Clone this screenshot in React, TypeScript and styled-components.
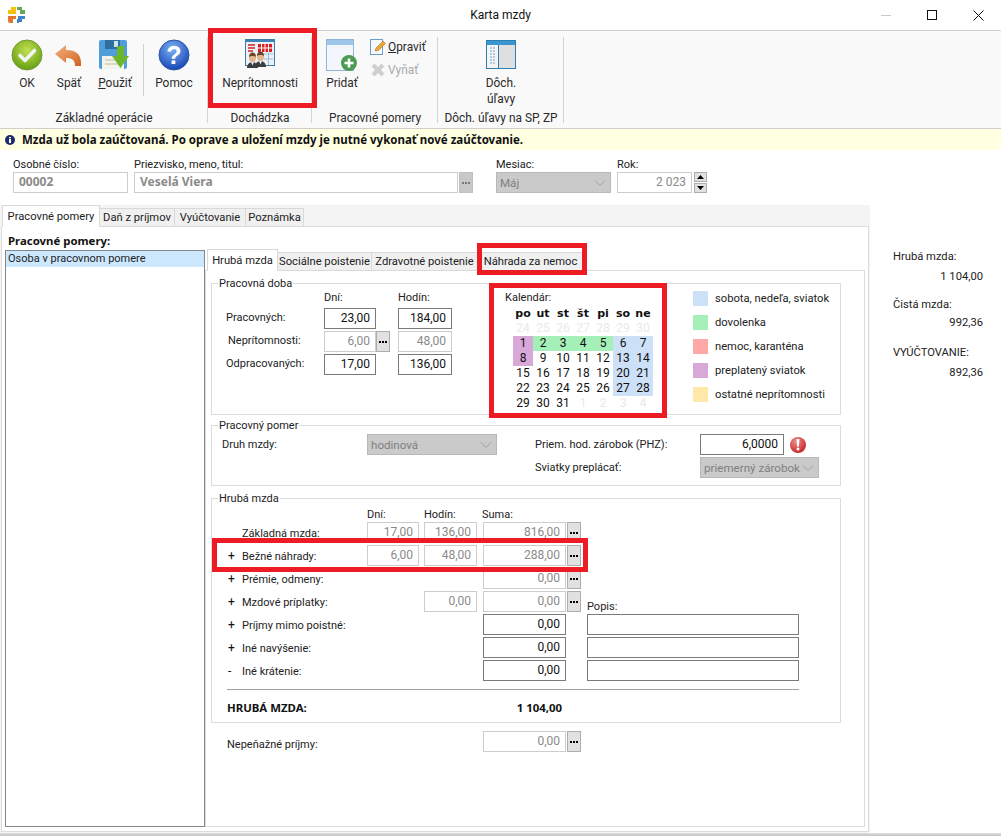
import React from "react";
import styled, { createGlobalStyle } from "styled-components";

const UI = `Roboto, "Liberation Sans", sans-serif`;
const BOLD = `"Noto Sans", "Liberation Sans", sans-serif`;
const CALBOLD = `"DejaVu Sans", "Liberation Sans", sans-serif`;

const Global = createGlobalStyle`
  html, body { margin: 0; padding: 0; background: #fff; }
  body { font: 11px/16px ${UI}; color: #111; }
  * { box-sizing: border-box; }
`;

const Page = styled.div`
  position: relative;
  width: 1001px;
  height: 836px;
  overflow: hidden;
  display: flex;
  flex-direction: column;
`;

const TitleBar = styled.div`
  height: 30px;
  flex: none;
  display: grid;
  grid-template-columns: 1fr auto 1fr;
  align-items: center;
  border-bottom: 1px solid #cfcfcf;
  box-sizing: content-box;
`;
const TitleLogo = styled.div`
  padding: 1px 0 0 8px;
  display: flex;
`;
const TitleText = styled.div`
  font-size: 12px;
`;
const WindowControls = styled.div`
  display: flex;
  justify-content: flex-end;
`;
const WindowControl = styled.div`
  width: 46px;
  height: 30px;
  display: flex;
  align-items: center;
  justify-content: center;
`;

const Ribbon = styled.div`
  height: 98px;
  flex: none;
  display: flex;
  background: #f9f9f9;
  border-bottom: 1px solid #cfcfcf;
  font-size: 11.9px;
`;
const RibbonGroup = styled.div<{ $w: number }>`
  width: ${(p) => p.$w}px;
  position: relative;
  display: flex;
  flex-direction: column;
  &::after {
    content: "";
    position: absolute;
    right: 0;
    top: 6px;
    bottom: 5px;
    width: 1px;
    background: #d4d4d4;
  }
`;
const RibbonTools = styled.div<{ $left?: number; $center?: boolean }>`
  height: 77px;
  display: flex;
  padding-left: ${(p) => p.$left ?? 0}px;
  justify-content: ${(p) => (p.$center ? "center" : "flex-start")};
`;
const GroupLabel = styled.div`
  text-align: center;
  line-height: 20px;
  height: 20px;
  color: #2a2a2a;
  white-space: nowrap;
`;
const Tool = styled.div<{ $w: number }>`
  width: ${(p) => p.$w}px;
  padding-top: 8px;
  display: flex;
  flex-direction: column;
  align-items: center;
  text-align: center;
  color: #2a2a2a;
`;
const ToolIcon = styled.div`
  width: 32px;
  height: 32px;
  margin-bottom: 4px;
  flex: none;
`;
const ToolDivider = styled.div`
  width: 1px;
  height: 52px;
  margin: 13px 0 0 5px;
  background: #d0d0d0;
`;
const SmallTools = styled.div`
  display: flex;
  flex-direction: column;
  gap: 7px;
  padding-top: 8px;
  margin-left: 5px;
`;
const SmallTool = styled.div<{ $off?: boolean }>`
  height: 16px;
  display: flex;
  align-items: center;
  gap: 2px;
  color: ${(p) => (p.$off ? "#aaa" : "#2a2a2a")};
`;

const InfoBar = styled.div`
  height: 21px;
  flex: none;
  display: flex;
  align-items: center;
  gap: 7px;
  padding-left: 5px;
  background: #ffffe1;
  font: bold 11.5px/16px ${BOLD};
  color: #111;
  white-space: nowrap;
`;

const HeaderRow = styled.div`
  height: 55px;
  flex: none;
  display: flex;
  padding: 7px 0 0 13px;
`;
const HeaderField = styled.div<{ $w: number; $ml?: number }>`
  width: ${(p) => p.$w}px;
  margin-left: ${(p) => p.$ml ?? 0}px;
  flex: none;
`;
const HeaderLabel = styled.div`
  color: #222;
  white-space: nowrap;
  height: 15px;
  line-height: 15px;
`;
const FieldWithButton = styled.div`
  display: flex;
  gap: 1px;
`;

const Field = styled.div<{ $kind?: "on" | "off"; $left?: boolean; $w?: number; $bold?: boolean }>`
  height: 21px;
  width: ${(p) => (p.$w ? `${p.$w}px` : "100%")};
  flex: none;
  border: 1px solid ${(p) => (p.$kind === "on" ? "#7a7a7a" : "#cdcdcd")};
  background: #fff;
  color: ${(p) => (p.$kind === "on" ? "#111" : "#8a8a8a")};
  text-align: ${(p) => (p.$left ? "left" : "right")};
  padding: 0 5px;
  line-height: 18px;
  font-family: ${(p) => (p.$bold ? BOLD : UI)};
  font-weight: ${(p) => (p.$bold ? 700 : 400)};
  font-size: 12px;
  white-space: nowrap;
`;
const DotsButton = styled.div<{ $muted?: boolean }>`
  width: 14px;
  height: 21px;
  flex: none;
  background: ${(p) => (p.$muted ? "#c8c8c8" : "#e1e1e1")};
  border: 1px solid ${(p) => (p.$muted ? "#c0c0c0" : "#adadad")};
  display: flex;
  align-items: center;
  justify-content: center;
  gap: 1px;
`;
const Dot = styled.i<{ $muted?: boolean }>`
  width: 2px;
  height: 2px;
  background: ${(p) => (p.$muted ? "#777" : "#000")};
`;
const SelectBox = styled.div`
  height: 21px;
  display: flex;
  align-items: center;
  justify-content: space-between;
  padding: 0 4px 0 3px;
  background: #cacaca;
  border: 1px solid #b8b8b8;
  color: #7f7f7f;
  font-size: 11.6px;
  white-space: nowrap;
`;
const Spin = styled.div`
  width: 13px;
  height: 21px;
  margin-left: 1px;
  flex: none;
  display: flex;
  flex-direction: column;
  gap: 1px;
`;
const SpinPart = styled.div`
  flex: 1;
  background: #e1e1e1;
  border: 1px solid #adadad;
  display: flex;
  align-items: center;
  justify-content: center;
`;

const Workspace = styled.div`
  flex: 1;
  min-height: 0;
  display: flex;
`;
const LeftColumn = styled.div`
  width: 870px;
  flex: none;
  height: 628px;
  background: #f4f4f4;
  display: flex;
  flex-direction: column;
`;
const TabStrip = styled.div<{ $pad: number; $h: number }>`
  display: flex;
  align-items: flex-end;
  height: ${(p) => p.$h}px;
  padding-left: ${(p) => p.$pad}px;
  flex: none;
  position: relative;
  z-index: 1;
`;
const Tab = styled.div<{ $w: number; $active?: boolean }>`
  width: ${(p) => p.$w}px;
  height: ${(p) => (p.$active ? 22 : 19)}px;
  margin-bottom: -1px;
  flex: none;
  border: 1px solid #d9d9d9;
  border-bottom-color: ${(p) => (p.$active ? "#fff" : "#d9d9d9")};
  border-left-width: ${(p) => (p.$active ? 1 : 0)}px;
  background: ${(p) => (p.$active ? "#fff" : "#f0f0f0")};
  color: #222;
  padding-top: ${(p) => (p.$active ? 3 : 1)}px;
  text-align: center;
  font-size: 11.2px;
  white-space: nowrap;
`;
const OuterPanel = styled.div`
  margin-left: 1px;
  width: 868px;
  height: 606px;
  flex: none;
  background: #fff;
  border: 1px solid #dcdcdc;
  padding: 6px 0 0 3px;
`;
const PanelTitle = styled.div`
  font: bold 11.4px/16px ${BOLD};
  margin: 0 0 1px 3px;
  color: #111;
`;
const PanelBody = styled.div`
  display: flex;
  height: 577px;
`;
const PersonList = styled.div`
  width: 200px;
  flex: none;
  border: 1px solid #85858c;
  height: 577px;
`;
const PersonRow = styled.div`
  height: 16px;
  background: #cce8ff;
  padding-left: 2px;
  line-height: 16px;
  color: #222;
`;
const InnerArea = styled.div`
  width: 660px;
  flex: none;
  display: flex;
  flex-direction: column;
`;
const InnerPanel = styled.div`
  flex: 1;
  border: 1px solid #dcdcdc;
  padding: 12px 23px 0 5px;
`;
const Group = styled.div<{ $h: number; $mb?: number }>`
  position: relative;
  height: ${(p) => p.$h}px;
  margin-bottom: ${(p) => p.$mb ?? 0}px;
  border: 1px solid #dcdcdc;
`;
const GroupLegend = styled.div`
  position: absolute;
  left: 6px;
  top: -7px;
  background: #fff;
  padding: 0 1px;
  color: #222;
  line-height: 14px;
`;

const DobaRow = styled.div`
  display: flex;
`;
const DobaGrid = styled.div`
  display: grid;
  grid-template-columns: 112px 52px 15px 7px 54px;
  grid-template-rows: 22px repeat(3, 21px);
  row-gap: 2px;
`;
const ColHead = styled.div<{ $col: number }>`
  grid-column: ${(p) => p.$col};
  padding-top: 7px;
  color: #222;
  line-height: 14px;
`;
const DobaLabel = styled.div<{ $pad: number }>`
  grid-column: 1;
  padding-left: ${(p) => p.$pad}px;
  line-height: 20px;
  color: #222;
  white-space: nowrap;
`;
const CalendarBlock = styled.div`
  margin-left: 53px;
  padding-top: 6px;
  width: 148px;
`;
const CalendarLabel = styled.div`
  line-height: 16px;
  color: #222;
`;
const CalendarGrid = styled.div`
  display: grid;
  grid-template-columns: repeat(7, 20px);
  grid-auto-rows: 15px;
  margin-left: 8px;
`;
const CalHead = styled.div`
  font: bold 11px/15px ${CALBOLD};
  text-align: center;
  color: #111;
`;
const CalCell = styled.div<{ $tone?: string; $faint?: boolean }>`
  text-align: center;
  line-height: 15px;
  font-size: 12px;
  background: ${(p) => p.$tone ?? "transparent"};
  color: ${(p) => (p.$faint ? "#e9e9e9" : "#111")};
`;
const LegendList = styled.div`
  margin-left: 40px;
  padding-top: 7px;
  display: flex;
  flex-direction: column;
  gap: 9px;
`;
const LegendItem = styled.div`
  display: flex;
  height: 15px;
  align-items: center;
  gap: 7px;
  color: #222;
  white-space: nowrap;
  font-size: 11.2px;
`;
const Swatch = styled.div<{ $c: string }>`
  width: 15px;
  height: 15px;
  background: ${(p) => p.$c};
`;

const PomerGrid = styled.div`
  display: grid;
  grid-template-columns: 155px 130px 38px 165px 119px;
  grid-template-rows: 21px 21px;
  row-gap: 2px;
  padding-top: 8px;
`;
const PomerLabel = styled.div<{ $col: number; $pad?: number }>`
  grid-column: ${(p) => p.$col};
  padding-left: ${(p) => p.$pad ?? 0}px;
  line-height: 21px;
  color: #222;
  white-space: nowrap;
`;
const InputWithIcon = styled.div`
  display: flex;
  gap: 5px;
  align-items: center;
  grid-column: 5;
`;

const WageGrid = styled.div`
  display: grid;
  grid-template-columns: 135px 52px 53px 98px 214px;
  column-gap: 5px;
  grid-template-rows: 12px repeat(7, 21px);
  row-gap: 2px;
  padding: 9px 0 0 15px;
`;
const WageHead = styled.div<{ $col: number }>`
  grid-column: ${(p) => p.$col};
  line-height: 14px;
  color: #222;
`;
const WageLabel = styled.div`
  grid-column: 1;
  display: flex;
  line-height: 23px;
  color: #222;
  white-space: nowrap;
`;
const Sign = styled.span`
  width: 15px;
  flex: none;
  padding-left: 1px;
  color: #111;
  font-size: 12px;
`;
const SumCell = styled.div`
  grid-column: 4;
  display: flex;
  gap: 1px;
  padding-left: 1px;
`;
const PopisCell = styled.div`
  grid-column: 5;
  justify-self: end;
  width: 212px;
`;
const PopisLabel = styled.div`
  grid-column: 5;
  justify-self: end;
  width: 212px;
  align-self: end;
  line-height: 14px;
  margin-bottom: -2px;
  color: #222;
`;
const WageRule = styled.div`
  height: 1px;
  background: #a0a0a0;
  margin: 8px 0 0 15px;
  width: 572px;
`;
const TotalRow = styled.div`
  display: grid;
  grid-template-columns: 135px 198px;
  column-gap: 5px;
  padding-left: 15px;
  margin-top: 10px;
  font: bold 11.4px/16px ${BOLD};
  color: #111;
  white-space: nowrap;
`;
const TotalValue = styled.div`
  grid-column: 2;
  text-align: right;
  padding-right: 3px;
`;
const NonCashRow = styled.div`
  display: grid;
  grid-template-columns: 135px 52px 53px 98px;
  column-gap: 5px;
  margin-top: 8px;
  padding-left: 16px;
  color: #222;
`;
const NonCashLabel = styled.div`
  grid-column: 1 / span 3;
  line-height: 27px;
`;

const Summary = styled.div`
  flex: 1;
  padding: 44px 0 0 23px;
`;
const SummaryItem = styled.div<{ $gap: number; $mb: number }>`
  width: 90px;
  display: flex;
  flex-direction: column;
  gap: ${(p) => p.$gap}px;
  margin-bottom: ${(p) => p.$mb}px;
  color: #222;
  font-size: 11.2px;
  white-space: nowrap;
`;
const SummaryValue = styled.div`
  text-align: right;
`;

const BottomEdge = styled.div`
  height: 3px;
  flex: none;
  background: linear-gradient(#dddddd, #c4c4c4);
`;

const Mark = styled.div<{ $x: number; $y: number; $w: number; $h: number }>`
  position: absolute;
  left: ${(p) => p.$x}px;
  top: ${(p) => p.$y}px;
  width: ${(p) => p.$w}px;
  height: ${(p) => p.$h}px;
  border: 5px solid #ed1c24;
  pointer-events: none;
  z-index: 5;
`;

/* ---------- icons ---------- */
const LogoIcon = () => (
  <svg width="17" height="17" viewBox="0 0 17 17">
    <path d="M3 0h5v7H0V3h3z" fill="#f4c20d" />
    <path d="M9 0h5v3h3v4h-5V3H9z" fill="#6aa84f" />
    <path d="M0 9h8v3H5v4H2a2 2 0 0 1-2-2z" fill="#e2752f" />
    <path d="M10 9h7v3h-3v3h-3v1H9v-4h1z" fill="#3d85c6" />
  </svg>
);
const OkIcon = () => (
  <svg width="32" height="32" viewBox="0 0 32 32">
    <defs>
      <radialGradient id="okg" cx="50%" cy="35%" r="70%">
        <stop offset="0" stopColor="#c3e254" />
        <stop offset="1" stopColor="#5c9a0c" />
      </radialGradient>
    </defs>
    <circle cx="16" cy="16" r="15" fill="url(#okg)" stroke="#7a9a35" />
    <path d="M9 16.500l5 5 9.500-10" fill="none" stroke="#f4f4f4" strokeWidth="3.600" strokeLinecap="round" strokeLinejoin="round" />
  </svg>
);
const BackIcon = () => (
  <svg width="32" height="32" viewBox="0 0 32 32">
    <defs>
      <linearGradient id="bkg" x1="0" y1="0" x2="1" y2="1">
        <stop offset="0" stopColor="#f6b27c" />
        <stop offset="1" stopColor="#cf6324" />
      </linearGradient>
    </defs>
    <path d="M2 15 L13 6 L13 11 C23 11 29 15 28 27 L22 27 C22 21 19 19 13 19 L13 24 Z" fill="url(#bkg)" />
  </svg>
);
const SaveIcon = () => (
  <svg width="32" height="32" viewBox="0 0 32 32">
    <rect x="0" y="1" width="28" height="29" rx="2" fill="#4f9edb" />
    <rect x="6" y="1" width="15" height="9" fill="#2e6f9f" />
    <rect x="15" y="2" width="4" height="6" fill="#cfe4f3" />
    <rect x="3" y="17" width="22" height="13" fill="#f3f3ee" />
    <path d="M6 21h13M6 25h13" stroke="#c9b98e" />
    <path d="M18 7h7v10h5L21.500 29 13 17h5z" fill="#6cb52d" />
  </svg>
);
const HelpIcon = () => (
  <svg width="32" height="32" viewBox="0 0 32 32">
    <defs>
      <radialGradient id="hlg" cx="45%" cy="30%" r="75%">
        <stop offset="0" stopColor="#7fb2f5" />
        <stop offset="1" stopColor="#0f3fb0" />
      </radialGradient>
    </defs>
    <circle cx="16" cy="16" r="15" fill="url(#hlg)" stroke="#2a55a8" />
    <text x="16" y="25" textAnchor="middle" fontFamily="'Liberation Sans', sans-serif" fontWeight="700" fontSize="25" fill="#fff">?</text>
  </svg>
);
const Person = ({ x, y }: { x: number; y: number }) => (
  <g transform={`translate(${x} ${y})`}>
    <path d="M0 16c0-4 3-6 5.500-6s5.500 2 5.500 6z" fill="#3d3d3d" />
    <path d="M4 10h3l-1.500 3.500z" fill="#f0f0f0" />
    <ellipse cx="5.500" cy="5.500" rx="3.500" ry="4.500" fill="#e2b58d" />
    <path d="M2 5c0-3 1.500-4.500 3.500-4.500S9 2 9 5C8 3.500 3 3.500 2 5z" fill="#6b4526" />
  </g>
);
const AbsenceIcon = () => (
  <svg width="32" height="32" viewBox="0 0 32 32">
    <rect x="1.500" y="0.500" width="29" height="26" fill="#eaf2f8" stroke="#3f7ca8" />
    <rect x="2" y="1" width="28" height="2" fill="#3f86b8" />
    <path d="M4 6h7M4 9h7M4 12h5" stroke="#d81e1e" strokeWidth="1.500" />
    <path d="M14 5h14v8H14z" fill="#d81e1e" />
    <path d="M17.500 5v8M21 5v8M24.500 5v8M14 9h14" stroke="#fff" />
    <path d="M20 15h9M20 20h9M24.500 13v13" stroke="#9cc0da" />
    <Person x={11} y={12} />
    <Person x={3} y={13} />
  </svg>
);
const AddIcon = () => (
  <svg width="32" height="32" viewBox="0 0 32 32">
    <rect x="0.500" y="0.500" width="27" height="31" fill="#f3f7fd" stroke="#8fb4d6" />
    <rect x="1" y="1" width="26" height="5" fill="#9cc7ea" />
    <circle cx="23" cy="24" r="8" fill="#4f9a52" />
    <path d="M23 19.500v9M18.500 24h9" stroke="#fff" strokeWidth="2.600" />
  </svg>
);
const EditIcon = () => (
  <svg width="16" height="16" viewBox="0 0 16 16">
    <rect x="0.500" y="0.500" width="12" height="15" fill="#f5f9fd" stroke="#6d9cc4" />
    <path d="M5 12l1-3 7-7 2.500 2.500-7 7z" fill="#eaa83c" stroke="#b8791f" strokeWidth="0.600" />
  </svg>
);
const RemoveIcon = () => (
  <svg width="16" height="16" viewBox="0 0 16 16">
    <path d="M2 4.500L4.500 2 8 5.500 11.500 2 14 4.500 10.500 8 14 11.500 11.500 14 8 10.500 4.500 14 2 11.500 5.500 8z" fill="#cfcfcf" stroke="#bcbcbc" strokeWidth="0.500" />
  </svg>
);
const ListWindowIcon = () => (
  <svg width="32" height="32" viewBox="0 0 32 32">
    <rect x="1.500" y="1.500" width="29" height="28" fill="#f4f4f4" stroke="#2b7fb3" />
    <rect x="2" y="2" width="28" height="4" fill="#3b96cf" />
    <rect x="14" y="6" width="16" height="23" fill="#dfdfdf" />
    <path d="M13.500 6v23" stroke="#2b7fb3" />
    <path d="M5 9h6M5 12h6M5 15h6M5 18h6M5 21h6M5 24h6" stroke="#7d9fb8" strokeDasharray="2 1" />
  </svg>
);
const Chevron = () => (
  <svg width="12" height="8" viewBox="0 0 12 8">
    <path d="M1 1.500l5 5 5-5" fill="none" stroke="#a0a0a0" />
  </svg>
);
const Warning = () => (
  <svg width="18" height="18" viewBox="0 0 18 18">
    <defs>
      <radialGradient id="wrg" cx="40%" cy="30%" r="75%">
        <stop offset="0" stopColor="#f09090" />
        <stop offset="1" stopColor="#c41f1f" />
      </radialGradient>
    </defs>
    <circle cx="9" cy="9" r="8" fill="url(#wrg)" />
    <path d="M7.500 3h3l-.6 7.500H8.100z" fill="#fff" />
    <circle cx="9" cy="13" r="1.500" fill="#fff" />
  </svg>
);
const InfoIcon = () => (
  <svg width="10" height="10" viewBox="0 0 10 10">
    <circle cx="5" cy="5" r="5" fill="#1b2a6b" />
    <rect x="4" y="4" width="2" height="4" fill="#fff" />
    <rect x="4" y="2" width="2" height="1.300" fill="#fff" />
  </svg>
);

/* ---------- data ---------- */
const BLUE = "#cce0f7";
const GREEN = "#a5efb8";
const PURPLE = "#d8a8d8";
const toneFor = (d: number) => {
  if (d === 1 || d === 8) return PURPLE;
  if (d >= 2 && d <= 5) return GREEN;
  if ([6, 7, 13, 14, 20, 21, 27, 28].includes(d)) return BLUE;
  return undefined;
};
const DAYS = ["po", "ut", "st", "št", "pi", "so", "ne"];
const PREV = [24, 25, 26, 27, 28, 29, 30];
const MAY = Array.from({ length: 31 }, (_, i) => i + 1);
const NEXT = [1, 2, 3, 4];
const LEGEND: [string, string][] = [
  [BLUE, "sobota, nedeľa, sviatok"],
  [GREEN, "dovolenka"],
  ["#ffa8a8", "nemoc, karanténa"],
  [PURPLE, "preplatený sviatok"],
  ["#ffe8a8", "ostatné neprítomnosti"],
];

const Dots = ({ muted }: { muted?: boolean }) => (
  <DotsButton $muted={muted}>
    <Dot $muted={muted} />
    <Dot $muted={muted} />
    <Dot $muted={muted} />
  </DotsButton>
);

export default function App() {
  return (
    <Page>
      <Global />
      <TitleBar>
        <TitleLogo><LogoIcon /></TitleLogo>
        <TitleText>Karta mzdy</TitleText>
        <WindowControls>
          <WindowControl>
            <svg width="10" height="10" viewBox="0 0 10 10"><path d="M0 5.500h10" stroke="#c8c8c8" /></svg>
          </WindowControl>
          <WindowControl>
            <svg width="10" height="10" viewBox="0 0 10 10"><rect x="0.500" y="0.500" width="9" height="9" fill="none" stroke="#111" /></svg>
          </WindowControl>
          <WindowControl>
            <svg width="11" height="11" viewBox="0 0 11 11"><path d="M.5.500l10 10M10.500.500l-10 10" stroke="#111" /></svg>
          </WindowControl>
        </WindowControls>
      </TitleBar>

      <Ribbon>
        <RibbonGroup $w={208}>
          <RibbonTools $left={8}>
            <Tool $w={38}><ToolIcon><OkIcon /></ToolIcon>OK</Tool>
            <Tool $w={46}><ToolIcon><BackIcon /></ToolIcon>Späť</Tool>
            <Tool $w={46}><ToolIcon><SaveIcon /></ToolIcon><span><u>P</u>oužiť</span></Tool>
            <ToolDivider />
            <Tool $w={60}><ToolIcon><HelpIcon /></ToolIcon>Pomoc</Tool>
          </RibbonTools>
          <GroupLabel>Základné operácie</GroupLabel>
        </RibbonGroup>
        <RibbonGroup $w={104}>
          <RibbonTools $center>
            <Tool $w={90}><ToolIcon><AbsenceIcon /></ToolIcon>Neprítomnosti</Tool>
          </RibbonTools>
          <GroupLabel>Dochádzka</GroupLabel>
        </RibbonGroup>
        <RibbonGroup $w={126}>
          <RibbonTools $left={7}>
            <Tool $w={46}><ToolIcon><AddIcon /></ToolIcon>Pridať</Tool>
            <SmallTools>
              <SmallTool><EditIcon /><span><u>O</u>praviť</span></SmallTool>
              <SmallTool $off><RemoveIcon />Vyňať</SmallTool>
            </SmallTools>
          </RibbonTools>
          <GroupLabel>Pracovné pomery</GroupLabel>
        </RibbonGroup>
        <RibbonGroup $w={126}>
          <RibbonTools $center>
            <Tool $w={60}><ToolIcon><ListWindowIcon /></ToolIcon>Dôch.<br />úľavy</Tool>
          </RibbonTools>
          <GroupLabel>Dôch. úľavy na SP, ZP</GroupLabel>
        </RibbonGroup>
      </Ribbon>

      <InfoBar>
        <InfoIcon />
        Mzda už bola zaúčtovaná. Po oprave a uložení mzdy je nutné vykonať nové zaúčtovanie.
      </InfoBar>

      <HeaderRow>
        <HeaderField $w={115}>
          <HeaderLabel>Osobné číslo:</HeaderLabel>
          <Field $left $bold>00002</Field>
        </HeaderField>
        <HeaderField $w={339} $ml={6}>
          <HeaderLabel>Priezvisko, meno, titul:</HeaderLabel>
          <FieldWithButton>
            <Field $left $bold $w={324}>Veselá Viera</Field>
            <Dots muted />
          </FieldWithButton>
        </HeaderField>
        <HeaderField $w={115} $ml={23}>
          <HeaderLabel>Mesiac:</HeaderLabel>
          <SelectBox>Máj<Chevron /></SelectBox>
        </HeaderField>
        <HeaderField $w={89} $ml={6}>
          <HeaderLabel>Rok:</HeaderLabel>
          <FieldWithButton>
            <Field $w={75}>2 023</Field>
            <Spin>
              <SpinPart><svg width="7" height="4" viewBox="0 0 7 4"><path d="M3.500 0L7 4H0z" fill="#000" /></svg></SpinPart>
              <SpinPart><svg width="7" height="4" viewBox="0 0 7 4"><path d="M0 0h7L3.500 4z" fill="#000" /></svg></SpinPart>
            </Spin>
          </FieldWithButton>
        </HeaderField>
      </HeaderRow>

      <Workspace>
        <LeftColumn>
          <TabStrip $pad={2} $h={21}>
            <Tab $w={98} $active>Pracovné pomery</Tab>
            <Tab $w={75}>Daň z príjmov</Tab>
            <Tab $w={71}>Vyúčtovanie</Tab>
            <Tab $w={58}>Poznámka</Tab>
          </TabStrip>
          <OuterPanel>
            <PanelTitle>Pracovné pomery:</PanelTitle>
            <PanelBody>
              <PersonList><PersonRow>Osoba v pracovnom pomere</PersonRow></PersonList>
              <InnerArea>
                <TabStrip $pad={2} $h={20}>
                  <Tab $w={71} $active>Hrubá mzda</Tab>
                  <Tab $w={94}>Sociálne poistenie</Tab>
                  <Tab $w={106}>Zdravotné poistenie</Tab>
                  <Tab $w={106}>Náhrada za nemoc</Tab>
                </TabStrip>
                <InnerPanel>
                  <Group $h={132} $mb={10}>
                    <GroupLegend>Pracovná doba</GroupLegend>
                    <DobaRow>
                      <DobaGrid>
                        <ColHead $col={2}>Dní:</ColHead>
                        <ColHead $col={5}>Hodín:</ColHead>
                        <DobaLabel $pad={14}>Pracovných:</DobaLabel>
                        <Field $kind="on">23,00</Field>
                        <span />
                        <span />
                        <Field $kind="on">184,00</Field>
                        <DobaLabel $pad={16}>Neprítomnosti:</DobaLabel>
                        <Field>6,00</Field>
                        <Dots />
                        <span />
                        <Field>48,00</Field>
                        <DobaLabel $pad={14}>Odpracovaných:</DobaLabel>
                        <Field $kind="on">17,00</Field>
                        <span />
                        <span />
                        <Field $kind="on">136,00</Field>
                      </DobaGrid>
                      <CalendarBlock>
                        <CalendarLabel>Kalendár:</CalendarLabel>
                        <CalendarGrid>
                          {DAYS.map((d) => <CalHead key={d}>{d}</CalHead>)}
                          {PREV.map((d) => <CalCell key={`p${d}`} $faint>{d}</CalCell>)}
                          {MAY.map((d) => <CalCell key={d} $tone={toneFor(d)}>{d}</CalCell>)}
                          {NEXT.map((d) => <CalCell key={`n${d}`} $faint>{d}</CalCell>)}
                        </CalendarGrid>
                      </CalendarBlock>
                      <LegendList>
                        {LEGEND.map(([c, t]) => (
                          <LegendItem key={t}><Swatch $c={c} />{t}</LegendItem>
                        ))}
                      </LegendList>
                    </DobaRow>
                  </Group>

                  <Group $h={61} $mb={12}>
                    <GroupLegend>Pracovný pomer</GroupLegend>
                    <PomerGrid>
                      <PomerLabel $col={1} $pad={10}>Druh mzdy:</PomerLabel>
                      <SelectBox>hodinová<Chevron /></SelectBox>
                      <PomerLabel $col={4}>Priem. hod. zárobok (PHZ):</PomerLabel>
                      <InputWithIcon>
                        <Field $kind="on" $w={84}>6,0000</Field>
                        <Warning />
                      </InputWithIcon>
                      <PomerLabel $col={4}>Sviatky preplácať:</PomerLabel>
                      <SelectBox>priemerný zárobok<Chevron /></SelectBox>
                    </PomerGrid>
                  </Group>

                  <Group $h={225}>
                    <GroupLegend>Hrubá mzda</GroupLegend>
                    <WageGrid>
                      <WageHead $col={2}>Dní:</WageHead>
                      <WageHead $col={3}>Hodín:</WageHead>
                      <WageHead $col={4}>Suma:</WageHead>
                      <span />

                      <WageLabel><Sign />Základná mzda:</WageLabel>
                      <Field>17,00</Field>
                      <Field>136,00</Field>
                      <SumCell><Field $w={83}>816,00</Field><Dots /></SumCell>
                      <span />

                      <WageLabel><Sign>+</Sign>Bežné náhrady:</WageLabel>
                      <Field>6,00</Field>
                      <Field>48,00</Field>
                      <SumCell><Field $w={83}>288,00</Field><Dots /></SumCell>
                      <span />

                      <WageLabel><Sign>+</Sign>Prémie, odmeny:</WageLabel>
                      <span />
                      <span />
                      <SumCell><Field $w={83}>0,00</Field><Dots /></SumCell>
                      <span />

                      <WageLabel><Sign>+</Sign>Mzdové príplatky:</WageLabel>
                      <span />
                      <Field>0,00</Field>
                      <SumCell><Field $w={83}>0,00</Field><Dots /></SumCell>
                      <PopisLabel>Popis:</PopisLabel>

                      <WageLabel><Sign>+</Sign>Príjmy mimo poistné:</WageLabel>
                      <span />
                      <span />
                      <SumCell><Field $kind="on" $w={83}>0,00</Field></SumCell>
                      <PopisCell><Field $kind="on" /></PopisCell>

                      <WageLabel><Sign>+</Sign>Iné navýšenie:</WageLabel>
                      <span />
                      <span />
                      <SumCell><Field $kind="on" $w={83}>0,00</Field></SumCell>
                      <PopisCell><Field $kind="on" /></PopisCell>

                      <WageLabel><Sign>-</Sign>Iné krátenie:</WageLabel>
                      <span />
                      <span />
                      <SumCell><Field $kind="on" $w={83}>0,00</Field></SumCell>
                      <PopisCell><Field $kind="on" /></PopisCell>
                    </WageGrid>
                    <WageRule />
                    <TotalRow>
                      <span>HRUBÁ MZDA:</span>
                      <TotalValue>1 104,00</TotalValue>
                    </TotalRow>
                  </Group>

                  <NonCashRow>
                    <NonCashLabel>Nepeňažné príjmy:</NonCashLabel>
                    <SumCell><Field $w={83}>0,00</Field><Dots /></SumCell>
                  </NonCashRow>
                </InnerPanel>
              </InnerArea>
            </PanelBody>
          </OuterPanel>
        </LeftColumn>
        <Summary>
          <SummaryItem $gap={4} $mb={12}>
            <div>Hrubá mzda:</div>
            <SummaryValue>1 104,00</SummaryValue>
          </SummaryItem>
          <SummaryItem $gap={2} $mb={14}>
            <div>Čistá mzda:</div>
            <SummaryValue>992,36</SummaryValue>
          </SummaryItem>
          <SummaryItem $gap={4} $mb={0}>
            <div>VYÚČTOVANIE:</div>
            <SummaryValue>892,36</SummaryValue>
          </SummaryItem>
        </Summary>
      </Workspace>
      <BottomEdge />

      <Mark $x={208} $y={28} $w={109} $h={80} />
      <Mark $x={477} $y={243} $w={110} $h={32} />
      <Mark $x={489} $y={283} $w={178} $h={135} />
      <Mark $x={212} $y={538} $w={376} $h={34} />
    </Page>
  );
}
